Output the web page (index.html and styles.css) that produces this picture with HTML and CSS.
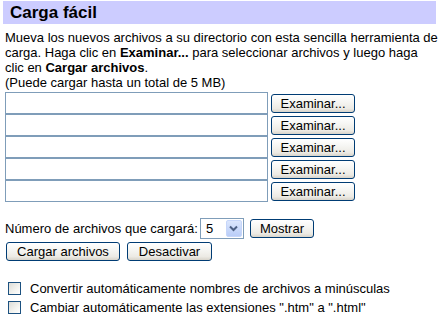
FILE: index.html
```html
<!DOCTYPE html>
<html lang="es">
<head>
<meta charset="utf-8">
<title>Carga fácil</title>
<link rel="stylesheet" href="styles.css">
</head>
<body>
<div class="header">Carga fácil</div>
<div class="intro">
Mueva los nuevos archivos a su directorio con esta sencilla herramienta de<br>
carga. Haga clic en <b>Examinar...</b> para seleccionar archivos y luego haga<br>
clic en <b>Cargar archivos</b>.<br>
(Puede cargar hasta un total de 5 MB)
</div>
<div class="files">
  <div class="file-row"><input class="file-input" type="text"><button class="btn btn-browse">Examinar...</button></div>
  <div class="file-row"><input class="file-input" type="text"><button class="btn btn-browse">Examinar...</button></div>
  <div class="file-row"><input class="file-input" type="text"><button class="btn btn-browse">Examinar...</button></div>
  <div class="file-row"><input class="file-input" type="text"><button class="btn btn-browse">Examinar...</button></div>
  <div class="file-row"><input class="file-input" type="text"><button class="btn btn-browse">Examinar...</button></div>
</div>
<div class="count-row">
  <span class="count-label">Número de archivos que cargará:</span>
  <div class="select">
    <span class="select-value">5</span>
    <span class="select-arrow"><svg width="9" height="7" viewBox="0 0 9 7"><path d="M1 1.5 L4.5 5 L8 1.5" fill="none" stroke="#4d6185" stroke-width="2"/></svg></span>
  </div>
  <button class="btn btn-show">Mostrar</button>
</div>
<div class="actions">
  <button class="btn btn-upload">Cargar archivos</button>
  <button class="btn btn-disable">Desactivar</button>
</div>
<div class="options">
  <label class="option"><input class="check" type="checkbox"><span>Convertir automáticamente nombres de archivos a minúsculas</span></label>
  <label class="option"><input class="check" type="checkbox"><span>Cambiar automáticamente las extensiones ".htm" a ".html"</span></label>
</div>
</body>
</html>
```
FILE: styles.css
```css
html, body {
  margin: 0;
  padding: 0;
  background: #fff;
}
body {
  font-family: "Liberation Sans", Arial, sans-serif;
  font-size: 13px;
  line-height: 15px;
  color: #000;
}
.header {
  margin: 1px 2px 0 3px;
  height: 23px;
  line-height: 24px;
  background: #ccccff;
  font-weight: bold;
  font-size: 17px;
  padding-left: 7px;
}
.intro {
  margin-top: 6px;
  padding: 0 0 0 5px;
  white-space: nowrap;
  overflow: hidden;
}
.files {
  margin-top: 2px;
  padding-left: 5px;
  display: flex;
  flex-direction: column;
}
.file-row {
  display: flex;
  align-items: center;
  height: 22px;
}
.file-input {
  box-sizing: border-box;
  width: 263px;
  height: 22px;
  margin: 0;
  border: 1px solid #7f9db9;
  background: #fff;
  outline: none;
  padding: 0 2px;
  font: inherit;
}
.btn {
  box-sizing: border-box;
  margin: 0;
  padding: 0;
  border: 1px solid #003c74;
  border-radius: 3px;
  background: linear-gradient(#ffffff 0%, #f6f6f3 40%, #eceae4 80%, #d8d4ca 100%);
  font-family: "Liberation Sans", Arial, sans-serif;
  font-size: 13px;
  color: #000;
  height: 19px;
  line-height: 17px;
}
.btn-browse {
  width: 84px;
  margin-left: 3px;
}
.count-row {
  margin-top: 16px;
  padding-left: 5px;
  display: flex;
  align-items: center;
  height: 21px;
}
.select {
  box-sizing: border-box;
  width: 44px;
  height: 21px;
  margin-left: 2px;
  border: 1px solid #7f9db9;
  background: #fff;
  display: flex;
  align-items: stretch;
  justify-content: space-between;
  padding: 1px;
}
.select-value {
  padding-left: 4px;
  line-height: 17px;
}
.select-arrow {
  width: 16px;
  border-radius: 2px;
  background: linear-gradient(#dbe6fd, #b9cdf8);
  border: 1px solid #c6d6fa;
  box-sizing: border-box;
  display: flex;
  align-items: center;
  justify-content: center;
}
.btn-show {
  width: 64px;
  margin-left: 6px;
}
.actions {
  margin-top: 3px;
  padding-left: 6px;
  display: flex;
  gap: 7px;
}
.btn-upload {
  width: 114px;
}
.btn-disable {
  width: 85px;
}
.options {
  margin-top: 21px;
  padding-left: 8px;
  display: flex;
  flex-direction: column;
  gap: 6px;
}
.option {
  display: flex;
  align-items: center;
  height: 13px;
}
.check {
  appearance: none;
  -webkit-appearance: none;
  box-sizing: border-box;
  width: 13px;
  height: 13px;
  margin: 0 9px 0 0;
  border: 1px solid #1c5180;
  background: linear-gradient(135deg, #dcdcd7 0%, #f3f3ef 60%, #ffffff 100%);
}
```
